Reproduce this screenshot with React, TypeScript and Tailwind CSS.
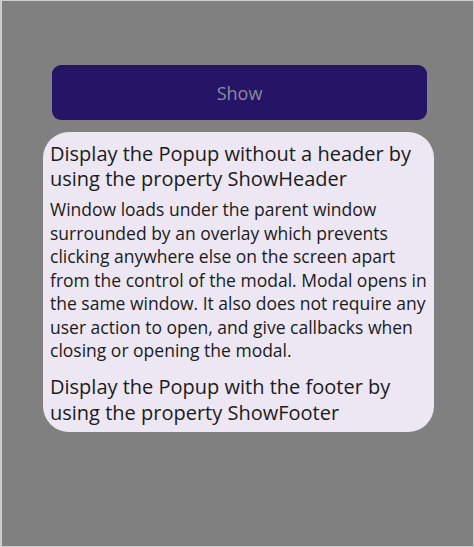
export default function App() {
  return (
    <div
      className="h-[547px] w-[474px] overflow-hidden border border-l-2 border-[#cdcdcd] bg-[#808080]"
      style={{ fontFamily: '"Open Sans", "Noto Sans", sans-serif' }}
    >
      <div className="pt-[64px]">
        <button className="ml-[50px] flex h-[55px] w-[375px] items-center justify-center rounded-[9px] bg-[#261466] pt-[2px] text-[18px] text-[#8d8b9e]">
          Show
        </button>
        <div className="mt-[12px] ml-[41px] w-[391px] rounded-[26px] bg-[#ede7f4] pt-[8.5px] pb-[5.5px] pl-[7px] pr-[3px] text-[#1b1b1b]">
          <p className="text-[20px] leading-[25px]">
            Display the Popup without a header by using the property ShowHeader
          </p>
          <p className="mt-[7.5px] text-[17.5px] leading-[23.5px]">
            Window loads under the parent window surrounded by an overlay which prevents clicking
            anywhere else on the screen apart from the control of the modal. Modal opens in the
            same window. It also does not require any user action to open, and give callbacks when
            closing or opening the modal.
          </p>
          <p className="mt-[11px] text-[20px] leading-[26.5px]">
            Display the Popup with the footer by using the property ShowFooter
          </p>
        </div>
      </div>
    </div>
  );
}
